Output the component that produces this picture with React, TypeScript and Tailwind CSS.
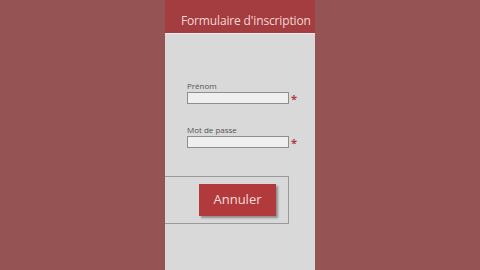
export default function App() {
  return (
    <div className="w-[480px] h-[270px] bg-[#955354] flex justify-center overflow-hidden" style={{ fontFamily: '"Open Sans", "Noto Sans", sans-serif' }}>
      <div className="w-[150px] h-full flex flex-col overflow-hidden">
        {/* Title bar */}
        <div className="h-[33px] bg-[#a33d3f] shrink-0 flex items-end pl-[16px] pb-[3px] overflow-hidden">
          <span className="text-[12px] tracking-[-0.15px] leading-[18px] text-[#f6d6d6] whitespace-nowrap">Formulaire d'inscription</span>
        </div>
        {/* Form body */}
        <div className="flex-1 bg-[#d9d9d9] border-t border-[#ececec] flex flex-col">
          <div className="pl-[22px] pt-[47px]">
            <div className="text-[8px] leading-[9px] text-[#555]">Prénom</div>
            <div className="flex items-center">
              <div className="w-[102px] h-[12px] bg-[#efefef] border border-[#8e8e8e]" />
              <span className="ml-[2px] mt-[3px] text-[#b5393b] text-[11px] leading-[12px] font-bold">*</span>
            </div>
          </div>
          <div className="pl-[22px] pt-[20px]">
            <div className="text-[8px] leading-[9px] text-[#555]">Mot de passe</div>
            <div className="flex items-center">
              <div className="w-[102px] h-[12px] bg-[#efefef] border border-[#8e8e8e]" />
              <span className="ml-[2px] mt-[3px] text-[#b5393b] text-[11px] leading-[12px] font-bold">*</span>
            </div>
          </div>
          <div className="mt-[27px] w-[124px] h-[48px] border border-l-0 border-[#9a9a9a] flex items-center pl-[34px]">
            <div className="w-[77px] h-[32px] bg-[#b13a3c] shadow-[2px_2px_2px_rgba(0,0,0,0.35)] flex items-center justify-center">
              <span className="text-[13px] text-[#f8dada]">Annuler</span>
            </div>
          </div>
        </div>
      </div>
    </div>
  );
}
